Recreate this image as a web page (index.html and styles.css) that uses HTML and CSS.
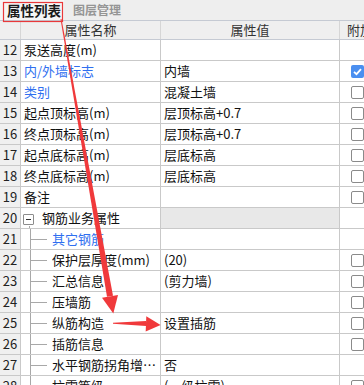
FILE: index.html
```html
<!DOCTYPE html>
<html lang="zh">
<head>
<meta charset="utf-8">
<link rel="stylesheet" href="styles.css">
</head>
<body>
<div class="page">
  <div class="tabs">
    <div class="tab active">属性列表</div>
    <div class="tab">图层管理</div>
  </div>
  <div class="grid">
    <div class="row head">
      <div class="num"></div>
      <div class="name">属性名称</div>
      <div class="val">属性值</div>
      <div class="ext">附加</div>
    </div>
    <div class="row"><div class="num">12</div><div class="name">泵送高度(m)</div><div class="val"></div><div class="ext"></div></div>
    <div class="row"><div class="num">13</div><div class="name blue">内/外墙标志</div><div class="val">内墙</div><div class="ext"><span class="cb on"><svg viewBox="0 0 13 13" width="13" height="13"><path d="M3 6.8 L5.5 9.2 L10 4.2" fill="none" stroke="#fff" stroke-width="1.8"/></svg></span></div></div>
    <div class="row"><div class="num">14</div><div class="name blue">类别</div><div class="val">混凝土墙</div><div class="ext"><span class="cb"></span></div></div>
    <div class="row"><div class="num">15</div><div class="name">起点顶标高(m)</div><div class="val">层顶标高+0.7</div><div class="ext"><span class="cb"></span></div></div>
    <div class="row"><div class="num">16</div><div class="name">终点顶标高(m)</div><div class="val">层顶标高+0.7</div><div class="ext"><span class="cb"></span></div></div>
    <div class="row"><div class="num">17</div><div class="name">起点底标高(m)</div><div class="val">层底标高</div><div class="ext"><span class="cb"></span></div></div>
    <div class="row"><div class="num">18</div><div class="name">终点底标高(m)</div><div class="val">层底标高</div><div class="ext"><span class="cb"></span></div></div>
    <div class="row"><div class="num">19</div><div class="name">备注</div><div class="val"></div><div class="ext"><span class="cb"></span></div></div>
    <div class="row"><div class="num">20</div><div class="name group"><span class="toggle"></span><span>钢筋业务属性</span></div><div class="val shade"></div><div class="ext"></div></div>
    <div class="row"><div class="num">21</div><div class="name child blue"><span class="tree"></span><span class="txt">其它钢筋</span></div><div class="val"></div><div class="ext"></div></div>
    <div class="row"><div class="num">22</div><div class="name child"><span class="tree"></span><span class="txt">保护层厚度(mm)</span></div><div class="val">(20)</div><div class="ext"><span class="cb"></span></div></div>
    <div class="row"><div class="num">23</div><div class="name child"><span class="tree"></span><span class="txt">汇总信息</span></div><div class="val">(剪力墙)</div><div class="ext"><span class="cb"></span></div></div>
    <div class="row"><div class="num">24</div><div class="name child"><span class="tree"></span><span class="txt">压墙筋</span></div><div class="val"></div><div class="ext"><span class="cb"></span></div></div>
    <div class="row"><div class="num">25</div><div class="name child"><span class="tree"></span><span class="txt">纵筋构造</span></div><div class="val">设置插筋</div><div class="ext"><span class="cb"></span></div></div>
    <div class="row"><div class="num">26</div><div class="name child"><span class="tree"></span><span class="txt">插筋信息</span></div><div class="val"></div><div class="ext"><span class="cb"></span></div></div>
    <div class="row"><div class="num">27</div><div class="name child"><span class="tree"></span><span class="txt">水平钢筋拐角增加长度</span></div><div class="val">否</div><div class="ext"></div></div>
    <div class="row"><div class="num">28</div><div class="name child"><span class="tree"></span><span class="txt">抗震等级</span></div><div class="val">(一级抗震)</div><div class="ext"><span class="cb"></span></div></div>
  </div>
  <svg class="annot" width="364" height="385" viewBox="0 0 364 385">
    <rect x="3.5" y="2.5" width="59" height="19" fill="none" stroke="#e8383a" stroke-width="1.2"/>
    <polygon points="60.5,19.1 61.5,18.9 113,295.8 107,296.8" fill="#f0393b"/>
    <polygon points="102,297.7 118,294.9 113.3,313.5" fill="#f0393b"/>
    <polygon points="113,322.8 113,323.8 146,326 146,321" fill="#f0393b"/>
    <polygon points="146.3,316.2 160.6,325 145.7,331.4" fill="#f0393b"/>
  </svg>
</div>
</body>
</html>
```
FILE: styles.css
```css
html, body {
  margin: 0;
  padding: 0;
  background: #fff;
}
.page {
  position: relative;
  width: 364px;
  height: 385px;
  overflow: hidden;
  font-family: "Noto Sans CJK SC", "Microsoft YaHei", sans-serif;
  font-size: 13px;
  color: #111;
}
.tabs {
  display: flex;
  height: 20px;
  background: #eeeeee;
  white-space: nowrap;
}
.tab {
  flex: 0 0 auto;
  line-height: 20px;
  font-size: 12px;
  font-weight: bold;
  color: #959595;
  padding: 0 0 0 8px;
  width: 62px;
  box-sizing: border-box;
}
.tab.active {
  width: 64px;
  background: #f6f6f6;
  color: #1a1a1a;
  font-size: 13.5px;
  padding: 0 0 0 7px;
  margin-right: 1px;
}
.grid {
  width: 420px;
}
.row {
  display: flex;
  height: 21px;
  box-sizing: border-box;
  border-bottom: 1px solid #c9c9c9;
  line-height: 20px;
  white-space: nowrap;
}
.row > div {
  box-sizing: border-box;
  overflow: hidden;
}
.num {
  flex: 0 0 21px;
  background: #f0f0f0;
  border-right: 1px solid #c9c9c9;
  text-align: center;
  color: #222;
  font-size: 13px;
}
.name {
  flex: 0 0 140px;
  border-right: 1px solid #c9c9c9;
  padding-left: 3px;
}
.val {
  flex: 0 0 179px;
  border-right: 1px solid #c9c9c9;
  padding-left: 3px;
}
.ext {
  flex: 0 0 60px;
  padding-left: 11px;
  display: flex;
  align-items: center;
}
.row.head {
  height: 20px;
  border-top: 1px solid #c5cad3;
  border-bottom: 1px solid #c5cad3;
  background: #efefef;
  line-height: 18px;
  color: #333;
}
.row.head > div {
  background: #efefef;
  border-right-color: #d6d6d6;
}
.row.head .name,
.row.head .val {
  text-align: center;
  padding-left: 0;
}
.row.head .ext {
  padding-left: 7px;
}
.blue {
  color: #2f6ff0;
}
.shade {
  background: #e8e8e8;
}
.group {
  display: flex;
  align-items: center;
  padding-left: 2px;
  gap: 8px;
  background: linear-gradient(#a8a8a8, #a8a8a8) 8px 18px / 1px 3px no-repeat;
}
.toggle {
  width: 11px;
  height: 11px;
  box-sizing: border-box;
  border: 1px solid #8c8c8c;
  border-radius: 1px;
  margin-top: 2px;
  background: linear-gradient(#333, #333) center / 5px 1px no-repeat #fff;
}
.child {
  display: flex;
  padding-left: 0;
}
.tree {
  flex: 0 0 31px;
  background:
    linear-gradient(#a8a8a8, #a8a8a8) 9px 0 / 1px 21px no-repeat,
    linear-gradient(#a8a8a8, #a8a8a8) 9px 10px / 17px 1px no-repeat;
}
.txt {
  overflow: hidden;
  text-overflow: ellipsis;
  width: 105px;
}
.cb {
  display: block;
  width: 13px;
  height: 13px;
  box-sizing: border-box;
  border: 1px solid #8a8a8a;
  border-radius: 2px;
  background: #fff;
}
.cb.on {
  border: none;
  background: #4a8ff0;
}
.cb svg {
  display: block;
}
.annot {
  position: absolute;
  left: 0;
  top: 0;
  pointer-events: none;
}
```
